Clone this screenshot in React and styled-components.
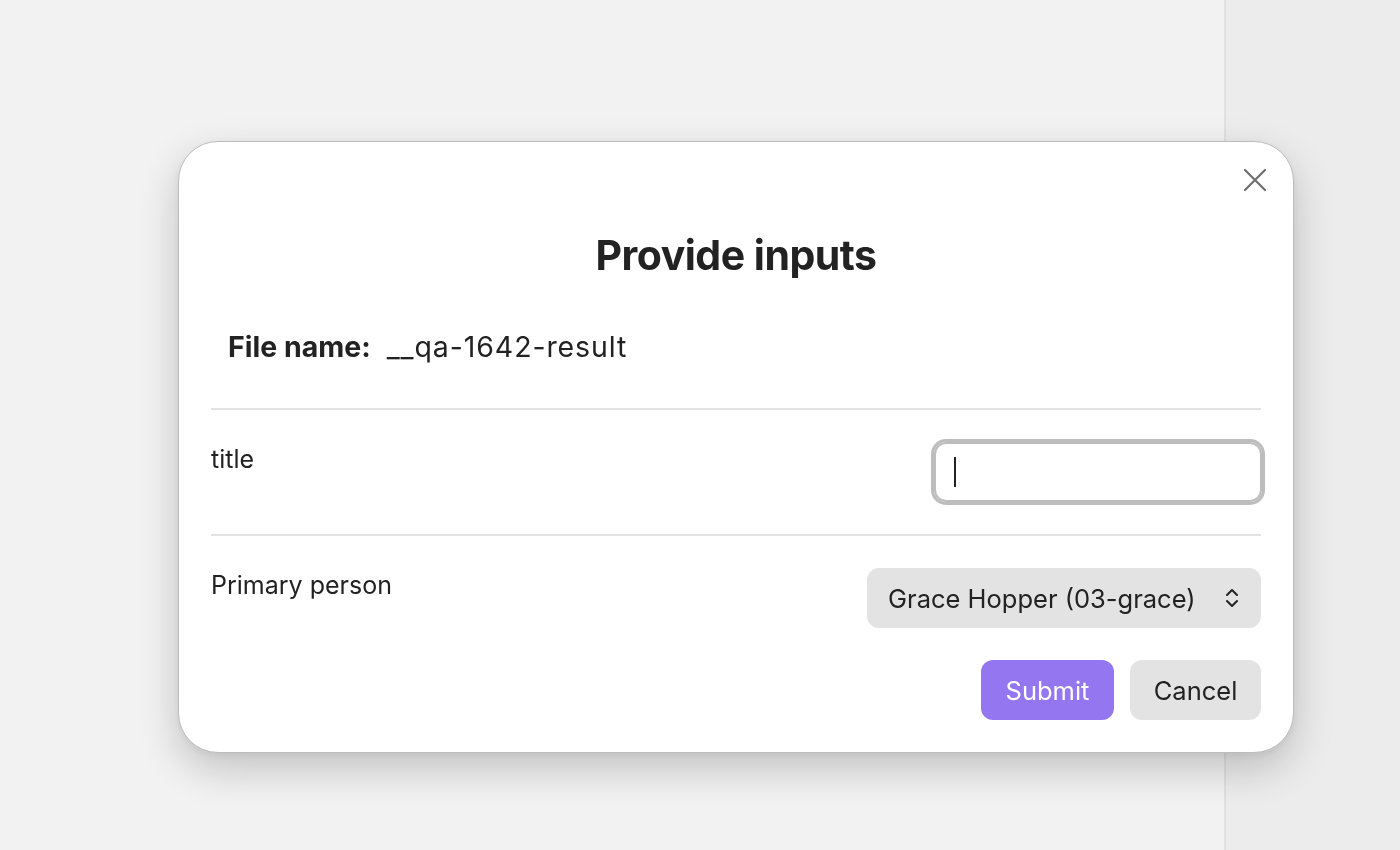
import React from 'react';
import styled, { createGlobalStyle } from 'styled-components';

const GlobalStyle = createGlobalStyle`
  html, body {
    margin: 0;
    padding: 0;
    height: 100%;
  }
  body {
    font-family: Inter, "Liberation Sans", sans-serif;
    color: #222;
    -webkit-font-smoothing: antialiased;
  }
  #root {
    height: 100%;
  }
`;

const Screen = styled.div`
  display: flex;
  width: 100%;
  height: 100vh;
  overflow: hidden;
`;

const Workspace = styled.main`
  flex: 1;
  background: #f2f2f2;
`;

const SidePanel = styled.aside`
  width: 174px;
  border-left: 2px solid #e0e0e0;
  background: #ececec;
`;

const Overlay = styled.div`
  position: fixed;
  inset: 0;
  padding: 141px 0 0 178px;
  box-sizing: border-box;
`;

const Dialog = styled.div`
  position: relative;
  width: 1116px;
  box-sizing: border-box;
  padding: 32px;
  background: #fff;
  border: 1px solid #bcbcbc;
  border-radius: 40px;
  box-shadow: 0 16px 40px rgba(0, 0, 0, 0.2), 0 2px 8px rgba(0, 0, 0, 0.06);
`;

const CloseButton = styled.button`
  position: absolute;
  top: 26px;
  right: 26px;
  width: 24px;
  height: 24px;
  padding: 0;
  border: none;
  background: none;
  display: flex;
  align-items: center;
  justify-content: center;
  cursor: pointer;
`;

const Title = styled.h1`
  margin: 56px 0 0;
  text-align: center;
  font-size: 41px;
  line-height: 50px;
  font-weight: 700;
  letter-spacing: -0.5px;
  color: #222;
`;

const FileLine = styled.div`
  display: flex;
  gap: 16px;
  padding: 50px 17px 44px;
  font-size: 28.5px;
  line-height: 34px;
`;

const FileLabel = styled.span`
  font-weight: 700;
`;

const FileValue = styled.span`
  letter-spacing: 0.9px;
`;

const Divider = styled.hr`
  margin: 0;
  border: none;
  border-top: 2px solid #e3e3e3;
`;

const FieldRow = styled.div`
  display: flex;
  justify-content: space-between;
  align-items: flex-start;
  padding: 32px 0;
`;

const FieldLabel = styled.label`
  font-size: 25px;
  line-height: 34px;
  color: #222;
`;

const TextInput = styled.div`
  width: 328px;
  height: 60px;
  margin-right: -1px;
  box-sizing: border-box;
  display: flex;
  align-items: center;
  padding-left: 18px;
  border: 2px solid #bdbdbd;
  border-radius: 12px;
  box-shadow: 0 0 0 3px #bdbdbd;
`;

const Caret = styled.span`
  width: 2px;
  height: 30px;
  background: #222;
`;

const Select = styled.div`
  width: 394px;
  height: 60px;
  box-sizing: border-box;
  display: flex;
  align-items: center;
  justify-content: space-between;
  padding: 0 22px 0 21px;
  background: #e3e3e3;
  border-radius: 12px;
  font-size: 25.5px;
  color: #222;
`;

const Actions = styled.div`
  display: flex;
  justify-content: flex-end;
  gap: 16px;
`;

const Button = styled.button`
  height: 60px;
  padding: 0 22px;
  border: none;
  border-radius: 12px;
  font-family: inherit;
  font-size: 25.5px;
  background: ${({ $primary }) => ($primary ? '#9576f1' : '#e3e3e3')};
  color: ${({ $primary }) => ($primary ? '#fff' : '#222')};
  min-width: ${({ $primary }) => ($primary ? '133px' : '131px')};
  cursor: pointer;
`;

const App = () => {
  return (
    <>
      <GlobalStyle />
      <Screen>
        <Workspace />
        <SidePanel />
      </Screen>
      <Overlay>
        <Dialog>
          <CloseButton aria-label="Close">
            <svg width="24" height="24" viewBox="0 0 24 24">
              <path d="M2 2 L22 22 M22 2 L2 22" stroke="#6f6f6f" strokeWidth="2.2" strokeLinecap="round" />
            </svg>
          </CloseButton>
          <Title>Provide inputs</Title>
          <FileLine>
            <FileLabel>File name:</FileLabel>
            <FileValue>__qa-1642-result</FileValue>
          </FileLine>
          <Divider />
          <FieldRow>
            <FieldLabel>title</FieldLabel>
            <TextInput>
              <Caret />
            </TextInput>
          </FieldRow>
          <Divider />
          <FieldRow>
            <FieldLabel>Primary person</FieldLabel>
            <Select>
              <span>Grace Hopper (03-grace)</span>
              <svg width="14" height="20" viewBox="0 0 14 20">
                <path d="M2 7 L7 2 L12 7 M2 13 L7 18 L12 13" fill="none" stroke="#222" strokeWidth="2" strokeLinecap="round" strokeLinejoin="round" />
              </svg>
            </Select>
          </FieldRow>
          <Actions>
            <Button $primary>Submit</Button>
            <Button>Cancel</Button>
          </Actions>
        </Dialog>
      </Overlay>
    </>
  );
};

export default App;
